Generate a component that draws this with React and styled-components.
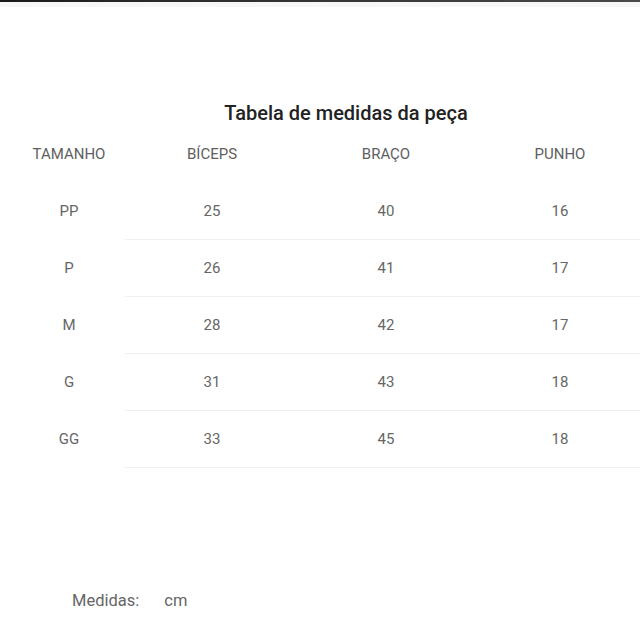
import React from "react";
import styled, { createGlobalStyle } from "styled-components";

const GlobalStyle = createGlobalStyle`
  html, body {
    margin: 0;
    padding: 0;
    background: #ffffff;
    overflow: hidden;
  }
  body {
    font-family: Roboto, "Liberation Sans", sans-serif;
  }
`;

const sizes = [
  { size: "PP", biceps: 25, braco: 40, punho: 16 },
  { size: "P", biceps: 26, braco: 41, punho: 17 },
  { size: "M", biceps: 28, braco: 42, punho: 17 },
  { size: "G", biceps: 31, braco: 43, punho: 18 },
  { size: "GG", biceps: 33, braco: 45, punho: 18 },
];

const Page = styled.div`
  width: 640px;
  height: 640px;
  display: flex;
  flex-direction: column;
  background: #fff;
`;

const TopBar = styled.div`
  height: 2px;
  background: linear-gradient(90deg, #1a1a1a 0%, #2b2b2b 25%, #4a4a4a 100%);
`;

const TopShade = styled.div`
  height: 5px;
  background: #f7f7f7;
`;

const Title = styled.h2`
  margin: 93px 0 0 0;
  padding-left: 52px;
  text-align: center;
  font-size: 20px;
  font-weight: 500;
  color: #222;
  line-height: 26px;
`;

const Table = styled.div`
  margin-left: 13px;
  width: 634px;
  display: grid;
  grid-template-columns: 112px repeat(3, 174px);
`;

const HeadCell = styled.div`
  height: 55px;
  padding-bottom: 2px;
  display: flex;
  align-items: center;
  justify-content: center;
  font-size: 15px;
  color: #606060;
  text-transform: uppercase;
`;

const Cell = styled.div`
  height: 56px;
  display: flex;
  align-items: center;
  justify-content: center;
  font-size: 15px;
  color: #666;
  border-bottom: 1px solid ${(p) => (p.$first ? "transparent" : "#f0f0f0")};
`;

const Footer = styled.div`
  margin-top: 123px;
  margin-left: 72px;
  display: flex;
  gap: 25px;
  font-size: 16.5px;
  color: #666;
`;

export default function App() {
  return (
    <>
      <GlobalStyle />
      <Page>
        <TopBar />
        <TopShade />
        <Title>Tabela de medidas da peça</Title>
        <Table>
          <HeadCell>Tamanho</HeadCell>
          <HeadCell>Bíceps</HeadCell>
          <HeadCell>Braço</HeadCell>
          <HeadCell>Punho</HeadCell>
          {sizes.map((r) => (
            <React.Fragment key={r.size}>
              <Cell $first>{r.size}</Cell>
              <Cell>{r.biceps}</Cell>
              <Cell>{r.braco}</Cell>
              <Cell>{r.punho}</Cell>
            </React.Fragment>
          ))}
        </Table>
        <Footer>
          <span>Medidas:</span>
          <span>cm</span>
        </Footer>
      </Page>
    </>
  );
}
